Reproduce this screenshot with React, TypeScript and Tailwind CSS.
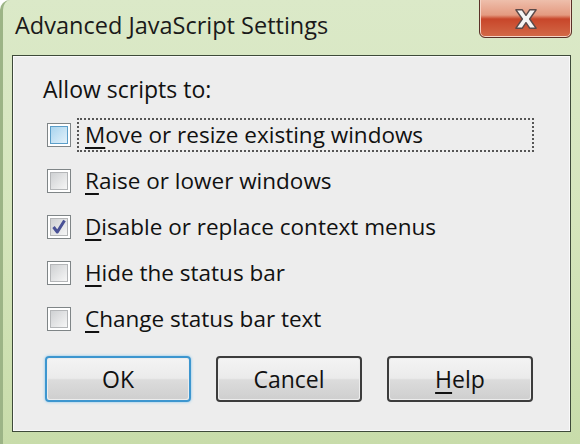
import React from "react"

const options = [
  { key: "M", rest: "ove or resize existing windows", checked: false, focused: true },
  { key: "R", rest: "aise or lower windows", checked: false, focused: false },
  { key: "D", rest: "isable or replace context menus", checked: true, focused: false },
  { key: "H", rest: "ide the status bar", checked: false, focused: false },
  { key: "C", rest: "hange status bar text", checked: false, focused: false },
]

function CheckBox({ checked, hot }: { checked: boolean; hot: boolean }) {
  return (
    <div className="w-[24px] h-[24px] shrink-0 border border-[#7f8587] bg-white p-[2px]">
      <div
        className={
          hot
            ? "relative w-full h-full border border-[#5b9ec9] bg-gradient-to-br from-[#a9d4ee] to-[#e2f1fa]"
            : "relative w-full h-full border border-[#b4b6b8] bg-gradient-to-br from-[#cfd1d3] to-[#f6f6f6]"
        }
      >
        {checked && (
          <svg viewBox="0 0 16 16" className="absolute inset-0 w-full h-full">
            <path d="M2.5 8 L6.3 13 L13.5 1.5" fill="none" stroke="#4a5296" strokeWidth="3" strokeLinejoin="round" />
          </svg>
        )}
      </div>
    </div>
  )
}

function DialogButton({ label, accel, primary }: { label: string; accel?: boolean; primary?: boolean }) {
  return (
    <div
      className={
        primary
          ? "w-[146px] h-[46px] rounded-[4px] border-2 border-[#3d96cf] p-[1px] shadow-[0_0_3px_#7cc3ee]"
          : "w-[146px] h-[46px] rounded-[4px] border-2 border-[#3c3c3c] p-[1px]"
      }
    >
      <div className="flex h-full items-center justify-center rounded-[2px] bg-[linear-gradient(#f3f3f3_0%,#ebebeb_48%,#dcdcdc_52%,#cfcfcf_100%)] text-[23px] text-[#111]">
        {accel ? (
          <span>
            <span className="underline underline-offset-[4px] decoration-[2px]">{label[0]}</span>
            {label.slice(1)}
          </span>
        ) : (
          label
        )}
      </div>
    </div>
  )
}

export default function App() {
  return (
    <div className="relative flex flex-col w-[580px] h-[444px] overflow-hidden rounded-tl-[10px] border-l-[3px] border-[#9cb486] bg-gradient-to-b from-[#dbe9c8] via-[#d5e5bc] to-[#c8dcaa] px-[9px] pb-[12px] font-['Open_Sans','Noto_Sans',sans-serif] text-[#111]">
      <div className="flex h-[55px] shrink-0 items-start justify-between">
        <div className="pl-[3px] pt-[10px] text-[23.5px] leading-[30px] text-[#1a1a1a]">Advanced JavaScript Settings</div>
        <div className="mr-[-1px] mt-[-4px] flex h-[42px] w-[93px] items-center justify-center rounded-b-[6px] border border-[#5a3128] bg-[linear-gradient(#f0c6b4_0%,#e49a80_45%,#c8462a_55%,#d36a48_100%)] shadow-[inset_0_0_0_1px_#f6d4c6]">
          <svg viewBox="0 0 30 24" className="mt-[4px] w-[28px] h-[22px]">
            <path
              d="M4 2 H11 L15 8 L19 2 H26 L19 12 L26 22 H19 L15 16 L11 22 H4 L11 12 Z"
              fill="#f4f4f4"
              stroke="#5a4a4a"
              strokeWidth="1.6"
              strokeLinejoin="round"
            />
          </svg>
        </div>
      </div>

      <div className="flex flex-1 flex-col border border-[#3e4a3a] bg-[#ededed] shadow-[inset_0_0_0_1px_#fafafa]">
        <div className="pl-[30px] pt-[18px] text-[23px] leading-[30px]">Allow scripts to:</div>

        <div className="mt-[14px] flex flex-col gap-[12px] pl-[34px]">
          {options.map((o) => (
            <div key={o.key} className="flex h-[34px] items-center">
              <CheckBox checked={o.checked} hot={o.focused} />
              <div
                className={
                  o.focused
                    ? "ml-[6px] flex h-[34px] w-[457px] items-center border-2 border-dotted border-[#555] pl-[6px] text-[22.5px]"
                    : "ml-[6px] flex h-[34px] items-center border-2 border-transparent pl-[6px] text-[22.5px]"
                }
              >
                <span className="underline underline-offset-[4px] decoration-[2px]">{o.key}</span>
                {o.rest}
              </div>
            </div>
          ))}
        </div>

        <div className="mt-[20px] flex gap-[25px] pl-[32px]">
          <DialogButton label="OK" primary />
          <DialogButton label="Cancel" />
          <DialogButton label="Help" accel />
        </div>
      </div>
    </div>
  )
}
